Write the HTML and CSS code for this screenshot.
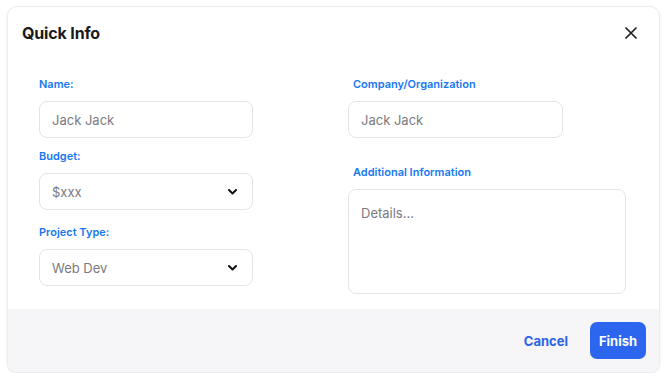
FILE: index.html
```html
<!DOCTYPE html>
<html lang="en">
<head>
<meta charset="utf-8">
<title>Quick Info</title>
<link rel="stylesheet" href="styles.css">
</head>
<body>
<div class="modal">
  <div class="modal-header">
    <h2 class="title">Quick Info</h2>
    <button class="close" aria-label="Close">
      <svg width="12" height="12" viewBox="0 0 12 12"><path d="M1 1L11 11M11 1L1 11" stroke="#1f1f1f" stroke-width="1.7" stroke-linecap="round"/></svg>
    </button>
  </div>
  <div class="modal-body">
    <div class="col col-left">
      <label class="label l-name">Name:</label>
      <div class="field">Jack Jack</div>
      <label class="label l-budget">Budget:</label>
      <div class="field select">$xxx
        <svg class="chev" width="9" height="6" viewBox="0 0 9 6"><path d="M1 1L4.5 4.5L8 1" fill="none" stroke="#111" stroke-width="2" stroke-linecap="round" stroke-linejoin="round"/></svg>
      </div>
      <label class="label l-project">Project Type:</label>
      <div class="field select">Web Dev
        <svg class="chev" width="9" height="6" viewBox="0 0 9 6"><path d="M1 1L4.5 4.5L8 1" fill="none" stroke="#111" stroke-width="2" stroke-linecap="round" stroke-linejoin="round"/></svg>
      </div>
    </div>
    <div class="col col-right">
      <label class="label l-company">Company/Organization</label>
      <div class="field short">Jack Jack</div>
      <label class="label l-additional">Additional Information</label>
      <div class="field textarea">Details...</div>
    </div>
  </div>
  <div class="modal-footer">
    <button class="btn-cancel">Cancel</button>
    <button class="btn-finish">Finish</button>
  </div>
</div>
</body>
</html>
```

FILE: styles.css
```css
* { box-sizing: border-box; }
html, body { margin: 0; padding: 0; background: #ffffff; }
body {
  font-family: Inter, "Noto Sans", sans-serif;
  padding: 6px 8px 0 7px;
}
.modal {
  width: 653px;
  height: 367px;
  border: 1px solid #ececee;
  border-radius: 10px;
  box-shadow: 0 1px 3px rgba(0,0,0,0.07);
  background: #fff;
  display: flex;
  flex-direction: column;
  overflow: hidden;
}
.modal-header {
  height: 51px;
  display: flex;
  align-items: center;
  justify-content: space-between;
  padding: 0 22px 0 14px;
  flex: none;
}
.title {
  margin: 0;
  font-size: 16px;
  font-weight: 700;
  color: #1a1a1a;
  letter-spacing: -0.15px;
}
.close {
  border: 0;
  background: none;
  padding: 0;
  width: 12px;
  height: 12px;
  display: flex;
}
.modal-body {
  flex: 1;
  display: grid;
  grid-template-columns: 214px 278px;
  column-gap: 95px;
  padding: 19px 0 0 31px;
}
.col { display: flex; flex-direction: column; align-items: flex-start; }
.label {
  display: block;
  font-size: 11px;
  font-weight: 600;
  color: #1877f2;
  line-height: 14px;
  margin-bottom: 10px;
}
.col-right .label { padding-left: 5px; }
.l-budget { margin-top: 11px; }
.l-project { margin-top: 15px; }
.l-additional { margin-top: 27px; }
.field {
  width: 214px;
  height: 37px;
  border: 1px solid #e4e4e7;
  border-radius: 8px;
  font-size: 13px;
  color: #7a7a7f;
  padding: 0 12px;
  display: flex;
  align-items: center;
  justify-content: space-between;
}
.chev { margin-right: 3px; }
.field.short { width: 215px; }
.field.textarea {
  width: 278px;
  height: 105px;
  align-items: flex-start;
  padding-top: 15px;
}
.modal-footer {
  flex: none;
  height: 63px;
  background: #f6f6f8;
  display: flex;
  align-items: center;
  justify-content: flex-end;
  padding-right: 13px;
  gap: 22px;
}
.btn-cancel {
  border: 0;
  background: none;
  font-family: inherit;
  font-size: 13px;
  font-weight: 700;
  color: #2c62e8;
  padding: 0;
}
.btn-finish {
  border: 0;
  border-radius: 7px;
  background: #2d66ee;
  color: #fff;
  font-family: inherit;
  font-size: 13px;
  font-weight: 700;
  width: 56px;
  height: 37px;
  padding: 0;
}
```
